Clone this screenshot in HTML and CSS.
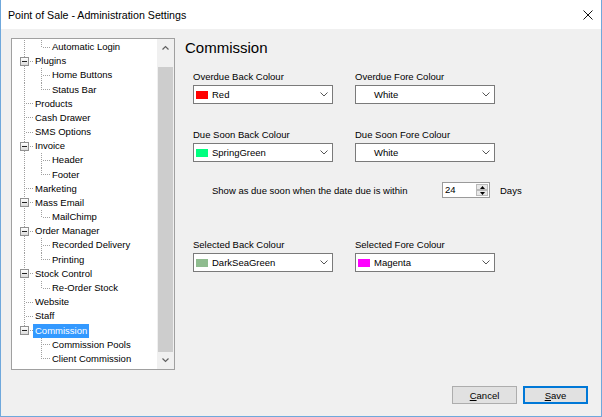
FILE: index.html
```html
<!DOCTYPE html>
<html>
<head>
<meta charset="utf-8">
<title>Point of Sale - Administration Settings</title>
<link rel="stylesheet" href="styles.css">
</head>
<body>
<div class="window">
  <div class="titlebar">
    <span class="title">Point of Sale - Administration Settings</span>
    <svg class="close" width="10" height="10" viewBox="0 0 10 10"><path d="M0.5 0.5 L9.5 9.5 M9.5 0.5 L0.5 9.5" stroke="#111" stroke-width="1" fill="none"/></svg>
  </div>
  <div class="client">
    <div class="main">
      <div class="tree">
        <div class="tree-list">
          <div class="row"><span class="c v"></span><span class="c l"></span><span class="lbl">Automatic Login</span></div>
          <div class="row"><span class="c t"><span class="exp"></span></span><span class="lbl">Plugins</span></div>
          <div class="row"><span class="c v"></span><span class="c t"></span><span class="lbl">Home Buttons</span></div>
          <div class="row"><span class="c v"></span><span class="c l"></span><span class="lbl">Status Bar</span></div>
          <div class="row"><span class="c t"></span><span class="lbl">Products</span></div>
          <div class="row"><span class="c t"></span><span class="lbl">Cash Drawer</span></div>
          <div class="row"><span class="c t"></span><span class="lbl">SMS Options</span></div>
          <div class="row"><span class="c t"><span class="exp"></span></span><span class="lbl">Invoice</span></div>
          <div class="row"><span class="c v"></span><span class="c t"></span><span class="lbl">Header</span></div>
          <div class="row"><span class="c v"></span><span class="c l"></span><span class="lbl">Footer</span></div>
          <div class="row"><span class="c t"></span><span class="lbl">Marketing</span></div>
          <div class="row"><span class="c t"><span class="exp"></span></span><span class="lbl">Mass Email</span></div>
          <div class="row"><span class="c v"></span><span class="c l"></span><span class="lbl">MailChimp</span></div>
          <div class="row"><span class="c t"><span class="exp"></span></span><span class="lbl">Order Manager</span></div>
          <div class="row"><span class="c v"></span><span class="c t"></span><span class="lbl">Recorded Delivery</span></div>
          <div class="row"><span class="c v"></span><span class="c l"></span><span class="lbl">Printing</span></div>
          <div class="row"><span class="c t"><span class="exp"></span></span><span class="lbl">Stock Control</span></div>
          <div class="row"><span class="c v"></span><span class="c l"></span><span class="lbl">Re-Order Stock</span></div>
          <div class="row"><span class="c t"></span><span class="lbl">Website</span></div>
          <div class="row"><span class="c t"></span><span class="lbl">Staff</span></div>
          <div class="row"><span class="c l"><span class="exp"></span></span><span class="lbl selected">Commission</span></div>
          <div class="row"><span class="c"></span><span class="c t"></span><span class="lbl">Commission Pools</span></div>
          <div class="row"><span class="c"></span><span class="c l"></span><span class="lbl">Client Commission</span></div>
        </div>
        <div class="vscroll">
          <div class="sarrow"><svg width="7" height="5" viewBox="0 0 7 5"><polyline points="0.5,4.5 3.5,1.5 6.5,4.5" stroke="#606060" stroke-width="1.2" fill="none"/></svg></div>
          <div class="track"><div class="thumb"></div></div>
          <div class="sarrow"><svg width="7" height="5" viewBox="0 0 7 5"><polyline points="0.5,0.5 3.5,3.5 6.5,0.5" stroke="#606060" stroke-width="1.2" fill="none"/></svg></div>
        </div>
      </div>
      <div class="panel">
        <h1 class="heading">Commission</h1>
        <div class="fields">
          <div class="field">
            <div class="flabel">Overdue Back Colour</div>
            <div class="combo"><span class="swatch red"></span><span class="ctext">Red</span><svg class="chev" width="8" height="5" viewBox="0 0 8 5"><polyline points="0.5,0.5 4,4 7.5,0.5" stroke="#555" stroke-width="1" fill="none"/></svg></div>
          </div>
          <div class="field">
            <div class="flabel">Overdue Fore Colour</div>
            <div class="combo"><span class="swatch white"></span><span class="ctext">White</span><svg class="chev" width="8" height="5" viewBox="0 0 8 5"><polyline points="0.5,0.5 4,4 7.5,0.5" stroke="#555" stroke-width="1" fill="none"/></svg></div>
          </div>
          <div class="field">
            <div class="flabel">Due Soon Back Colour</div>
            <div class="combo"><span class="swatch spring"></span><span class="ctext">SpringGreen</span><svg class="chev" width="8" height="5" viewBox="0 0 8 5"><polyline points="0.5,0.5 4,4 7.5,0.5" stroke="#555" stroke-width="1" fill="none"/></svg></div>
          </div>
          <div class="field">
            <div class="flabel">Due Soon Fore Colour</div>
            <div class="combo"><span class="swatch white"></span><span class="ctext">White</span><svg class="chev" width="8" height="5" viewBox="0 0 8 5"><polyline points="0.5,0.5 4,4 7.5,0.5" stroke="#555" stroke-width="1" fill="none"/></svg></div>
          </div>
        </div>
        <div class="spinrow">
          <span class="spintext">Show as due soon when the date due is within</span>
          <div class="spin">
            <span class="spinval">24</span>
            <div class="spinbtns">
              <div class="sbtn"><svg width="5" height="3" viewBox="0 0 5 3"><polygon points="0,3 2.5,0 5,3" fill="#000"/></svg></div>
              <div class="sbtn"><svg width="5" height="3" viewBox="0 0 5 3"><polygon points="0,0 2.5,3 5,0" fill="#000"/></svg></div>
            </div>
          </div>
          <span class="days">Days</span>
        </div>
        <div class="fields sel">
          <div class="field">
            <div class="flabel">Selected Back Colour</div>
            <div class="combo"><span class="swatch seagreen"></span><span class="ctext">DarkSeaGreen</span><svg class="chev" width="8" height="5" viewBox="0 0 8 5"><polyline points="0.5,0.5 4,4 7.5,0.5" stroke="#555" stroke-width="1" fill="none"/></svg></div>
          </div>
          <div class="field">
            <div class="flabel">Selected Fore Colour</div>
            <div class="combo"><span class="swatch magenta"></span><span class="ctext">Magenta</span><svg class="chev" width="8" height="5" viewBox="0 0 8 5"><polyline points="0.5,0.5 4,4 7.5,0.5" stroke="#555" stroke-width="1" fill="none"/></svg></div>
          </div>
        </div>
      </div>
    </div>
    <div class="buttons">
      <button class="btn"><u>C</u>ancel</button>
      <button class="btn default"><u>S</u>ave</button>
    </div>
  </div>
</div>
</body>
</html>
```
FILE: styles.css
```css
html, body {
  margin: 0;
  padding: 0;
  background: #f0f0f0;
  font-family: "Liberation Sans", Arial, sans-serif;
  color: #000;
}

.window {
  width: 602px;
  height: 417px;
  box-sizing: border-box;
  border: 1px solid #6fa8dc;
  border-top: none;
  display: flex;
  flex-direction: column;
  background: #f0f0f0;
  overflow: hidden;
}

.titlebar {
  height: 29px;
  flex: none;
  background: #fff;
  display: flex;
  align-items: center;
  justify-content: space-between;
  padding: 0 8px 0 7px;
  font-size: 10.66px;
}

.close {
  display: block;
}

.client {
  flex: 1;
  display: flex;
  flex-direction: column;
  padding: 9px 13px 0 10px;
}

.main {
  display: flex;
  height: 332px;
  gap: 10px;
}

/* Tree view */
.tree {
  width: 164px;
  height: 332px;
  flex: none;
  box-sizing: border-box;
  border: 1px solid #a0a0a0;
  background: #fff;
  display: flex;
}

.tree-list {
  flex: 1;
  padding: 1px 0 0 4px;
  overflow: hidden;
}

.row {
  height: 14.18px;
  display: flex;
  align-items: center;
  font-size: 9.5px;
  white-space: nowrap;
}

.c {
  width: 17px;
  height: 100%;
  flex: none;
  display: flex;
  align-items: center;
  background-repeat: no-repeat;
}

.c.v {
  background-image: repeating-linear-gradient(to bottom, #a0a0a0 0 1px, transparent 1px 2px);
  background-size: 1px 100%;
  background-position: 8px 0;
}

.c.t {
  background-image:
    repeating-linear-gradient(to bottom, #a0a0a0 0 1px, transparent 1px 2px),
    repeating-linear-gradient(to right, #a0a0a0 0 1px, transparent 1px 2px);
  background-size: 1px 100%, 8px 1px;
  background-position: 8px 0, 10px 50%;
}

.c.l {
  background-image:
    repeating-linear-gradient(to bottom, #a0a0a0 0 1px, transparent 1px 2px),
    repeating-linear-gradient(to right, #a0a0a0 0 1px, transparent 1px 2px);
  background-size: 1px 50%, 8px 1px;
  background-position: 8px 0, 10px 50%;
}

.exp {
  width: 9px;
  height: 9px;
  box-sizing: border-box;
  margin-left: 4px;
  border: 1px solid #919191;
  background:
    linear-gradient(#222, #222) center / 5px 1px no-repeat,
    linear-gradient(#ffffff, #dcdcdc);
}

.lbl {
  padding: 0 2px;
  line-height: 14px;
  height: 14px;
}

.lbl.selected {
  background: #3399ff;
  color: #fff;
}

.vscroll {
  width: 17px;
  flex: none;
  display: flex;
  flex-direction: column;
  background: #f0f0f0;
}

.sarrow {
  height: 17px;
  flex: none;
  display: flex;
  align-items: center;
  justify-content: center;
}

.sarrow svg {
  display: block;
}

.track {
  flex: 1;
  display: flex;
  flex-direction: column;
  padding: 11px 1px 0 1px;
}

.thumb {
  flex: 1;
  background: #cdcdcd;
}

/* Right panel */
.panel {
  flex: 1;
}

.heading {
  margin: 0;
  font-weight: normal;
  font-size: 15px;
  line-height: 20px;
  height: 20px;
}

.fields {
  display: grid;
  grid-template-columns: 140px 140px;
  column-gap: 22px;
  row-gap: 24px;
  padding-left: 8px;
  margin-top: 12px;
}

.fields.sel {
  margin-top: 40px;
}

.flabel {
  font-size: 9.5px;
  line-height: 13px;
  height: 13px;
  margin-bottom: 2px;
  white-space: nowrap;
}

.combo {
  height: 19px;
  box-sizing: border-box;
  border: 1px solid #7a7a7a;
  background: #fff;
  display: flex;
  align-items: center;
  padding: 0 4px 0 2px;
  font-size: 9.5px;
}

.swatch {
  width: 12px;
  height: 8px;
  flex: none;
  margin-right: 4px;
}

.swatch.red { background: #ff0000; }
.swatch.white { background: #ffffff; }
.swatch.spring { background: #00ff7f; }
.swatch.seagreen { background: #8fbc8f; }
.swatch.magenta { background: #ff00ff; }

.ctext {
  flex: 1;
  white-space: nowrap;
}

.chev {
  display: block;
  flex: none;
}

.spinrow {
  display: flex;
  align-items: center;
  margin-top: 20px;
  height: 16px;
  padding-left: 27px;
  font-size: 9.5px;
}

.spintext {
  width: 230px;
  flex: none;
  white-space: nowrap;
}

.spin {
  width: 48px;
  height: 16px;
  box-sizing: border-box;
  border: 1px solid #9a9a9a;
  background: #fff;
  display: flex;
  padding: 1px 1px 1px 0;
}

.spinval {
  flex: 1;
  padding-left: 2px;
  line-height: 12px;
}

.spinbtns {
  width: 12px;
  display: flex;
  flex-direction: column;
  gap: 0;
}

.sbtn {
  flex: 1;
  box-sizing: border-box;
  border: 1px solid #b9b9b9;
  background: #e8e8e8;
  display: flex;
  align-items: center;
  justify-content: center;
}

.sbtn svg {
  display: block;
}

.days {
  margin-left: 10px;
}

/* Buttons */
.buttons {
  display: flex;
  justify-content: flex-end;
  gap: 6px;
  margin-top: 16px;
}

.btn {
  width: 65px;
  height: 18px;
  box-sizing: border-box;
  border: 1px solid #adadad;
  background: #e1e1e1;
  font-family: "Liberation Sans", Arial, sans-serif;
  font-size: 9.5px;
  color: #000;
  padding: 0;
  margin: 0;
}

.btn.default {
  border-color: #0078d7;
  box-shadow: inset 0 0 0 1px #0078d7;
}
```
